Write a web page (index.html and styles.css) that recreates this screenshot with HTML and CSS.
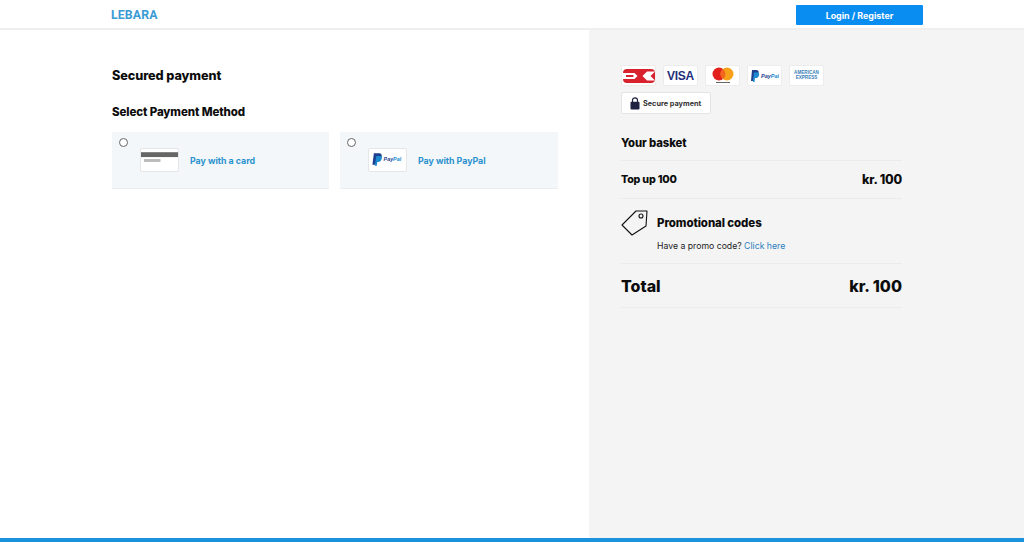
FILE: index.html
```html
<!DOCTYPE html>
<html lang="en">
<head>
<meta charset="utf-8">
<title>Secured payment</title>
<link rel="stylesheet" href="styles.css">
</head>
<body>
<div class="page">
  <header class="topbar">
    <div class="logo">LEBARA</div>
    <button class="login">Login / Register</button>
  </header>
  <main class="content">
    <section class="left">
      <h1 class="title">Secured payment</h1>
      <h2 class="subtitle">Select Payment Method</h2>
      <div class="methods">
        <div class="method">
          <span class="radio"></span>
          <span class="method-logo">
            <svg class="logo-svg" width="38" height="22" viewBox="0 0 38 22"><rect x="0" y="3" width="38" height="5" fill="#666"/><rect x="3" y="10" width="17" height="3" fill="#bbb"/></svg>
          </span>
          <span class="method-label">Pay with a card</span>
        </div>
        <div class="method">
          <span class="radio"></span>
          <span class="method-logo">
            <svg class="logo-svg" width="38" height="22" viewBox="0 0 38 22"><path d="M5 4h5c3 0 3.500 2 3 4-.5 2.500-2.500 3-4 3H8l-.8 5H3.500z" fill="#1f3f8f"/><path d="M7.500 7h4c1.500 0 2 1 1.500 3-.5 2-2 3-3.500 3H8.500L8 17H6z" fill="#1b8ad0"/><text class="pp-text" x="15" y="12"><tspan fill="#1f3f8f">Pay</tspan><tspan fill="#1b8ad0">Pal</tspan></text></svg>
          </span>
          <span class="method-label">Pay with PayPal</span>
        </div>
      </div>
    </section>
    <aside class="right">
      <div class="cards">
        <span class="card">
          <svg width="32" height="16" viewBox="0 0 32 16"><rect x="0" y="1" width="32" height="14" rx="4" fill="#d8232f"/><path d="M0 5h11.500l3 3-3 3H0z" fill="#fff"/><path d="M3 7h7l.8 1-.8 1H3z" fill="#d8232f"/><path d="M32 3.500h-8L19.500 8l4.500 4.500h8L27.500 8z" fill="#fff"/></svg>
        </span>
        <span class="card"><span class="visa">VISA</span></span>
        <span class="card">
          <svg width="22" height="17" viewBox="0 0 22 17"><circle cx="7" cy="7" r="6.500" fill="#e2201c"/><circle cx="15" cy="7" r="6.500" fill="#f7a11a"/><path d="M11 1.900a6.500 6.500 0 0 1 0 10.200 6.500 6.500 0 0 1 0-10.200z" fill="#f2651f"/><rect x="4" y="15" width="14" height="1" fill="#666"/></svg>
        </span>
        <span class="card">
          <svg width="28" height="14" viewBox="0 0 28 14"><path d="M1 1h4c2.500 0 3 1.500 2.500 3.500S5.500 7.500 4 7.500H3L2.500 12H0z" fill="#1f3f8f"/><path d="M3 3.500h3.500C8 3.500 8.500 4.500 8 6.500S6 9 5 9H4l-.5 4H2z" fill="#1b8ad0"/><text class="pp-text" x="10" y="9"><tspan fill="#1f3f8f">Pay</tspan><tspan fill="#1b8ad0">Pal</tspan></text></svg>
        </span>
        <span class="card"><span class="amex">AMERICAN<br>EXPRESS</span></span>
      </div>
      <div class="secure">
        <svg width="10" height="13" viewBox="0 0 10 13"><path d="M2.500 5V3.300a2.500 2.500 0 0 1 5 0V5" fill="none" stroke="#1d2340" stroke-width="1.200"/><rect x="0.500" y="4.800" width="9" height="7.700" rx="1" fill="#1d2340"/></svg>
        <span>Secure payment</span>
      </div>
      <h2 class="basket-title">Your basket</h2>
      <div class="row topup">
        <span>Top up 100</span>
        <span class="price">kr. 100</span>
      </div>
      <div class="promo">
        <svg class="tag" width="27" height="26" viewBox="0 0 27 26"><path d="M1 15 15 1h11l-1 15-14 9z" fill="none" stroke="#111" stroke-width="1.100" stroke-linejoin="round"/><circle cx="20" cy="6" r="2" fill="none" stroke="#111" stroke-width="1.100"/></svg>
        <div class="promo-body">
          <div class="promo-title">Promotional codes</div>
          <div class="promo-text">Have a promo code? <a class="promo-link" href="#">Click here</a></div>
        </div>
      </div>
      <div class="row total">
        <span>Total</span>
        <span>kr. 100</span>
      </div>
    </aside>
  </main>
  <div class="bottom-bar"></div>
</div>
</body>
</html>
```
FILE: styles.css
```css
* { box-sizing: border-box; }
html, body { margin: 0; padding: 0; height: 100%; }
body { font-family: Inter, "Liberation Sans", sans-serif; color: #0c0c0c; background: #fff; overflow: hidden; }
.page { height: 542px; display: flex; flex-direction: column; }
.topbar { height: 30px; flex: none; display: flex; align-items: flex-start; justify-content: space-between; padding: 5px 101px 0 111px; border-bottom: 2px solid #efefef; background: #fff; }
.logo { font-family: "Roboto", "Liberation Sans", sans-serif; font-weight: 700; font-size: 12.300px; letter-spacing: 0.150px; line-height: 20px; color: #3b9bd4; }
.login { width: 127px; height: 20px; border: 0; border-radius: 1px; background: #0a8df0; color: #fff; font-family: Inter, sans-serif; font-weight: 700; font-size: 8.900px; padding: 0; }
.content { flex: 1; display: flex; min-height: 0; }
.left { width: 589px; flex: none; padding: 38px 31px 0 112px; }
.title { margin: 0; font-size: 12.700px; line-height: 16px; font-weight: 800; letter-spacing: -0.100px; }
.subtitle { margin: 21px 0 0; font-size: 11.500px; line-height: 14px; font-weight: 800; letter-spacing: -0.100px; }
.methods { display: flex; gap: 11px; margin-top: 13px; }
.method { position: relative; width: 217px; height: 57px; background: #f3f7f9; border-bottom: 1px solid #ebeeef; display: flex; align-items: center; padding: 0 0 0 28px; }
.method + .method { width: 218px; }
.radio { position: absolute; left: 7px; top: 6px; width: 9px; height: 9px; border: 1px solid #666; border-radius: 50%; background: #fff; }
.method-logo { width: 39px; height: 24px; background: #fff; border: 1px solid #e4e6e8; border-radius: 2px; display: flex; align-items: flex-start; justify-content: center; overflow: hidden; }
.method + .method .method-logo { align-items: center; }
.method-label { margin-left: 11px; font-size: 8.800px; font-weight: 700; color: #2b92cf; }
.right { flex: 1; background: #f4f4f4; padding: 35px 122px 0 32px; }
.cards { display: flex; gap: 7px; }
.card { width: 35px; height: 21px; background: #fff; border: 1px solid #ececec; border-radius: 2px; display: flex; align-items: center; justify-content: center; overflow: hidden; }
.visa { font-family: "Liberation Sans", sans-serif; font-weight: 700; font-size: 12px; color: #25307c; letter-spacing: -0.300px; }
.amex { font-family: "Liberation Sans", sans-serif; font-weight: 700; font-size: 4.600px; line-height: 4.800px; color: #3a80b8; text-align: center; white-space: nowrap; }
.pp-text { font-family: "Liberation Sans", sans-serif; font-size: 5.500px; font-weight: 700; font-style: italic; }
.secure { margin-top: 6px; width: 90px; height: 22px; background: #fff; border: 1px solid #e4e4e4; border-radius: 2px; display: flex; align-items: center; gap: 3px; padding-left: 8px; font-size: 7.300px; font-weight: 700; color: #333; white-space: nowrap; }
.basket-title { margin: 22px 0 0; font-size: 11.300px; line-height: 14px; font-weight: 800; letter-spacing: -0.100px; padding-bottom: 10px; border-bottom: 1px solid #ebebeb; width: 281px; }
.row { display: flex; justify-content: space-between; align-items: center; width: 281px; }
.topup { height: 38px; font-size: 10.700px; font-weight: 800; border-bottom: 1px solid #ebebeb; letter-spacing: -0.200px; }
.price { font-size: 12.500px; }
.promo { display: flex; gap: 9px; height: 65px; width: 281px; border-bottom: 1px solid #ebebeb; padding-top: 11px; }
.tag { flex: none; }
.promo-title { font-size: 11.500px; line-height: 14px; font-weight: 800; margin-top: 6px; letter-spacing: -0.100px; }
.promo-text { font-size: 8.700px; line-height: 12px; margin-top: 10px; color: #222; }
.promo-link { color: #2b7fc0; text-decoration: none; }
.total { height: 44px; font-size: 16px; font-weight: 800; border-bottom: 1px solid #ebebeb; }
.bottom-bar { height: 4px; flex: none; background: #1a93dc; }
```
